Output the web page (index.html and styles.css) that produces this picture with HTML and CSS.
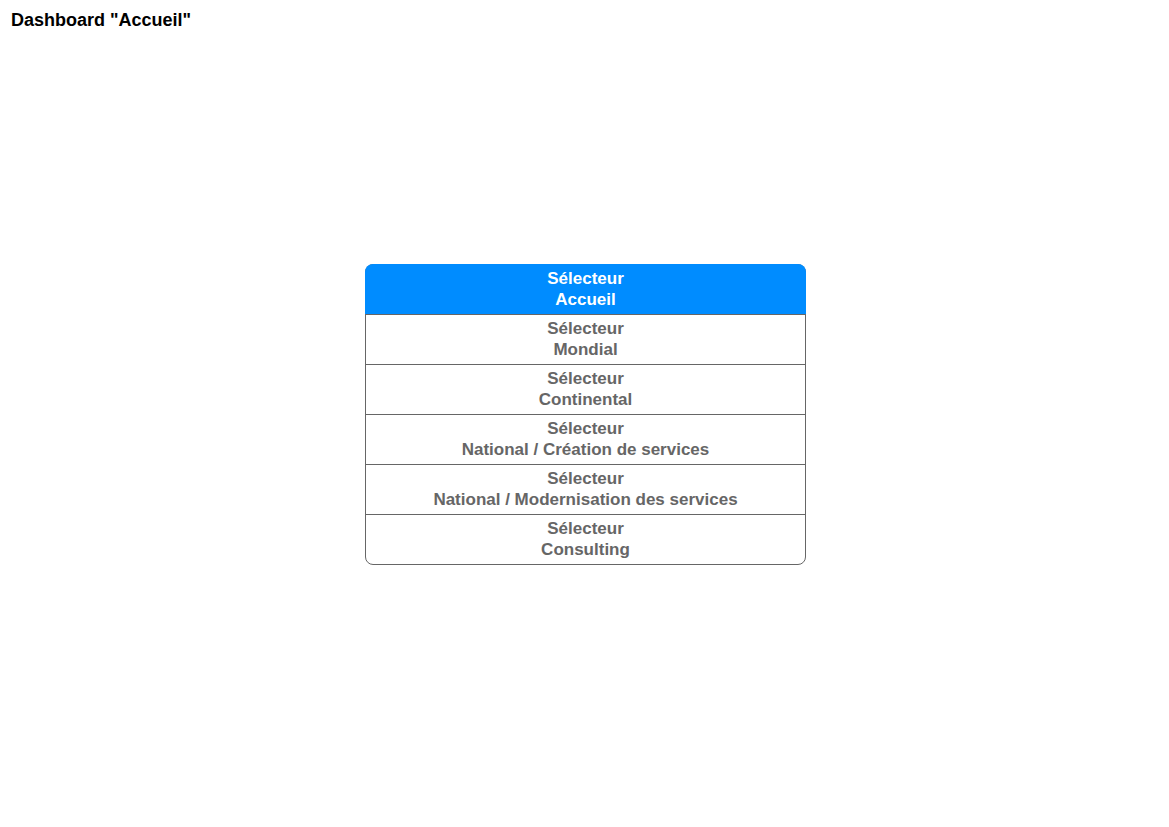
FILE: index.html
```html
<!DOCTYPE html>
<html lang="fr">
<head>
<meta charset="utf-8">
<title>Dashboard "Accueil"</title>
<link rel="stylesheet" href="styles.css">
</head>
<body>
<header class="title">Dashboard "Accueil"</header>
<main class="stage">
  <div class="menu">
    <div class="item active">Sélecteur<br>Accueil</div>
    <div class="item">Sélecteur<br>Mondial</div>
    <div class="item">Sélecteur<br>Continental</div>
    <div class="item">Sélecteur<br>National / Création de services</div>
    <div class="item">Sélecteur<br>National / Modernisation des services</div>
    <div class="item">Sélecteur<br>Consulting</div>
  </div>
</main>
</body>
</html>
```
FILE: styles.css
```css
html, body {
  margin: 0;
  padding: 0;
  background: #ffffff;
  font-family: "Liberation Sans", Arial, sans-serif;
}
.title {
  padding: 10px 0 0 11px;
  font-size: 18px;
  line-height: 21px;
  font-weight: bold;
  color: #000000;
}
.stage {
  padding: 233px 0 0 365px;
}
.menu {
  width: 439px;
  border: 1px solid #666666;
  border-radius: 8px;
}
.item {
  height: 48px;
  padding-bottom: 1px;
  display: flex;
  flex-direction: column;
  justify-content: center;
  text-align: center;
  font-size: 17px;
  line-height: 21px;
  font-weight: bold;
  color: #666666;
  border-top: 1px solid #666666;
}
.item.active {
  background: #008cff;
  color: #ffffff;
  border-top: none;
  height: 50px;
  padding-bottom: 0;
  margin: -1px -1px 0 -1px;
  border-radius: 8px 8px 0 0;
}
```
